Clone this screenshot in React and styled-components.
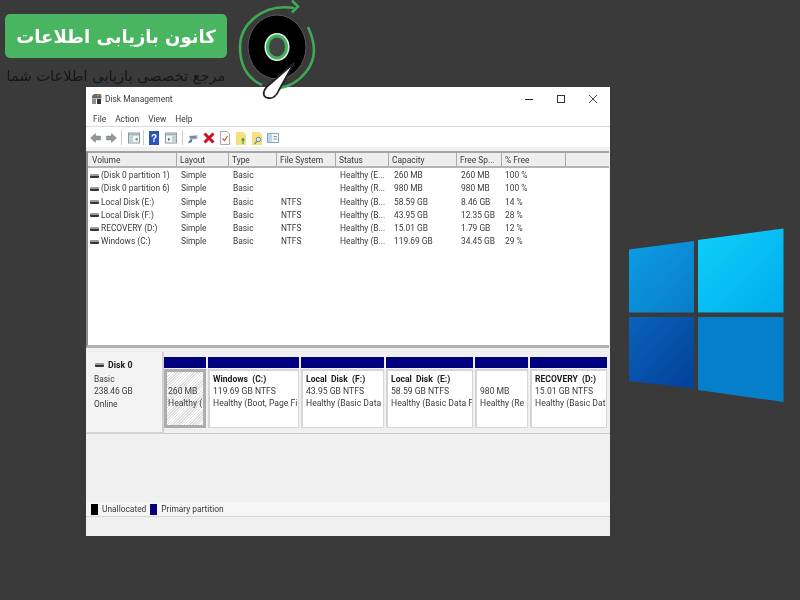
import React from "react";
import styled, { createGlobalStyle } from "styled-components";

const Global = createGlobalStyle`
  html, body { margin: 0; padding: 0; background: #3a3a3a; }
  #root { width: 800px; height: 600px; overflow: hidden; }
`;

const Desktop = styled.div`
  position: relative; width: 800px; height: 600px; background: #3a3a3a; overflow: hidden;
  font-family: Roboto, "Open Sans", sans-serif; color: #3a3a3a;
`;
const Banner = styled.div`
  position: absolute; left: 5px; top: 14px; width: 222px; height: 44px; border-radius: 5px;
  background: #4ab560; color: #fff; display: flex; align-items: center; justify-content: center;
  font: bold 18px "DejaVu Sans", sans-serif; direction: rtl; white-space: nowrap; filter: blur(.5px);
`;
const Tagline = styled.div`
  position: absolute; left: 5px; top: 66px; width: 222px; text-align: center; color: #161616;
  font: 14.6px/20px "DejaVu Sans", sans-serif; direction: rtl; white-space: nowrap; filter: blur(.6px);
`;
const DiscLogo = styled.svg`position: absolute; left: 235px; top: 0; z-index: 3; filter: blur(.4px);`;
const WinLogo = styled.svg`position: absolute; left: 620px; top: 220px; filter: blur(.3px);`;

const Win = styled.div`
  position: absolute; left: 86px; top: 87px; width: 523.5px; height: 449px; background: #f0f0f0;
  display: flex; flex-direction: column; font-size: 8.4px; filter: blur(.3px); z-index: 2;
`;
const TitleBar = styled.div`
  height: 23px; flex: none; background: #fff; display: flex; align-items: center; padding-left: 5px; gap: 3px; font-size: 8.4px;
`;
const WinButtons = styled.div`margin-left: auto; display: flex;`;
const WinBtn = styled.svg`width: 32px; height: 24px; display: block;`;
const MenuBar = styled.div`
  height: 17px; flex: none; background: #fff; display: flex; align-items: center; gap: 9px; padding: 2px 0 0 7px;
  border-bottom: 1px solid #d9d9d9; font-size: 8.4px; box-sizing: border-box;
`;
const ToolBar = styled.div`
  height: 24px; flex: none; display: flex; align-items: center; padding: 0 0 3px 4px; box-sizing: border-box;
  background: linear-gradient(#fff 82%, #f0f0f0 82%);
`;
const Tool = styled.svg`width: ${p => p.$w || 12}px; height: 14px; display: block; margin-left: ${p => p.$ml || 0}px; flex: none;`;
const Gap = styled.span`width: 5px; flex: none;`;
const Sep = styled.div`width: 1px; height: 15px; background: #ccc; margin-left: ${p => p.$ml || 3}px; margin-right: ${p => p.$mr || 3}px;`;

const List = styled.div`
  height: 197px; box-sizing: border-box; flex: none; background: #fff; margin-right: 1px;
  border-left: 2px solid #8a8a8a; border-top: 2px solid #a5a5a5; border-bottom: 3px solid #b0b0b0;
  display: flex; flex-direction: column;
`;
const cols = "89px 52px 48px 59px 53px 68px 45px 64px 1fr";
const Head = styled.div`
  display: grid; grid-template-columns: ${cols}; height: 15px; box-sizing: border-box; background: #eeeeee; border-bottom: 2px solid #b4b4b4; flex: none;
`;
const HeadCell = styled.div`
  border-right: ${p => p.$last ? "none" : "1px solid #a9a9a9"}; padding-left: ${p => p.$pl || 3}px; line-height: 14px; white-space: nowrap; overflow: hidden;
`;
const Rows = styled.div`padding-top: 1px;`;
const Row = styled.div`display: grid; grid-template-columns: ${cols}; height: 13.25px; line-height: 13.25px;`;
const Cell = styled.div`padding-left: ${p => p.$pl || 4}px; white-space: nowrap; overflow: hidden; display: flex; align-items: center; gap: 2px;`;
const DriveIcon = styled.span`
  width: 9px; height: 4px; margin-left: 1px; flex: none; display: block; border-radius: 1px;
  background: linear-gradient(#9a9a9a 40%, #333 40%);
`;

const Graph = styled.div`
  flex: 1; display: flex; flex-direction: column; background: #f0f0f0; min-height: 0;
`;
const DiskRow = styled.div`
  display: flex; height: 86px; flex: none; padding-top: 4px; border-bottom: 1px solid #c9c9c9; box-sizing: border-box;
`;
const DiskInfo = styled.div`
  width: 77px; height: 82px; margin-left: 1px; flex: none; background: #f3f3f3; border-right: 2px solid #d2d2d2; border-bottom: 2px solid #d2d2d2;
  box-sizing: border-box; padding: 7px 0 0 7px; line-height: 12.6px;
`;
const DiskName = styled.div`display: flex; align-items: center; gap: 4px; font-weight: 700; color: #222; font-size: 8.8px; margin-bottom: 1px;`;
const Parts = styled.div`display: flex; gap: 2px; padding: 5px 0 0 0; font-size: 8.6px;`;
const Part = styled.div`width: ${p => p.$w}px; display: flex; flex-direction: column; flex: none;`;
const PartBar = styled.div`height: 11px; background: #00007f; flex: none;`;
const PartBox = styled.div`
  height: 59px; box-sizing: border-box; margin-top: 1px; overflow: hidden; white-space: nowrap; line-height: 12px;
  padding: 2px 0 0 3px; background: #fff; border: 1px solid #d6d6d6; border-left-width: 2px; border-top-width: 2px;
`;
const HatchBox = styled(PartBox)`
  border: 3px solid #adadad; padding: 13px 0 0 1px; background: repeating-linear-gradient(135deg, #fff 0 1px, #dedede 1px 2px);
`;
const PartTitle = styled.div`font-weight: 700; color: #1a1a1a; height: 12px; word-spacing: 2px;`;
const Spacer = styled.div`flex: 1;`;
const Legend = styled.div`
  height: 14px; flex: none; background: #f5f5f5; display: flex; align-items: center; padding-left: 5px; gap: 4px;
  border-bottom: 1px solid #d5d5d5;
`;
const Swatch = styled.span`width: 7px; height: 11px; background: ${p => p.$c}; display: block; margin-left: ${p => p.$ml || 0}px;`;
const Status = styled.div`height: 19px; flex: none; background: #f0f0f0;`;

const rows = [
  ["(Disk 0 partition 1)", "", "Healthy (E...", "260 MB", "260 MB", "100 %"],
  ["(Disk 0 partition 6)", "", "Healthy (R...", "980 MB", "980 MB", "100 %"],
  ["Local Disk (E:)", "NTFS", "Healthy (B...", "58.59 GB", "8.46 GB", "14 %"],
  ["Local Disk (F:)", "NTFS", "Healthy (B...", "43.95 GB", "12.35 GB", "28 %"],
  ["RECOVERY (D:)", "NTFS", "Healthy (B...", "15.01 GB", "1.79 GB", "12 %"],
  ["Windows (C:)", "NTFS", "Healthy (B...", "119.69 GB", "34.45 GB", "29 %"],
];
const headers = ["Volume", "Layout", "Type", "File System", "Status", "Capacity", "Free Sp...", "% Free", ""];
const parts = [
  { w: 91, title: "Windows  (C:)", a: "119.69 GB NTFS", b: "Healthy (Boot, Page Fi" },
  { w: 83, title: "Local Disk  (F:)", a: "43.95 GB NTFS", b: "Healthy (Basic Data" },
  { w: 87, title: "Local Disk  (E:)", a: "58.59 GB NTFS", b: "Healthy (Basic Data F" },
  { w: 53, title: "", a: "980 MB", b: "Healthy (Re" },
  { w: 77, title: "RECOVERY  (D:)", a: "15.01 GB NTFS", b: "Healthy (Basic Dat" },
];

const Arrow = ({ flip }) => (
  <Tool $w={11} viewBox="0 0 11 14" style={flip ? { transform: "scaleX(-1)" } : undefined}>
    <path d="M0.5 7 L5.5 2.5 V5 H10.5 V9 H5.5 V11.5 Z" fill="#8f9a92" stroke="#7d857f" strokeWidth=".5" />
  </Tool>
);
const Panel = ({ side }) => (
  <Tool $w={12} viewBox="0 0 12 14">
    <rect x=".5" y="2" width="11" height="10" fill="#f4f6f6" stroke="#8b9aa3" />
    <rect x="1" y="2.5" width="10" height="2" fill="#9fb2bd" />
    <rect x={side === "l" ? 1 : 7} y="5" width="4" height="6.5" fill="#c6d2d8" />
    <path d={side === "l" ? "M9.5 6.5 L7 8.2 L9.5 10Z" : "M3 6.5 L5.5 8.2 L3 10Z"} fill="#4d8d55" />
  </Tool>
);

export default function App() {
  return (
    <Desktop>
      <Global />
      <Banner>کانون بازیابی اطلاعات</Banner>
      <Tagline>مرجع تخصصی بازیابی اطلاعات شما</Tagline>
      <DiscLogo width="90" height="105" viewBox="235 0 90 105">
        <path d="M294 8 C 262 3, 240 25, 240 47 C 240 65, 247 78, 262 85" fill="none" stroke="#3fa956" strokeWidth="2.6" />
        <path d="M292 0.5 L298 6.5 L292 12.5" fill="none" stroke="#3fa956" strokeWidth="2.6" />
        <path d="M308 27 C 316 44, 316 60, 306 72 C 298 82, 290 87, 278 88" fill="none" stroke="#3fa956" strokeWidth="2.6" />
        <ellipse cx="277" cy="47" rx="29" ry="32" fill="#000" stroke="#5a5a5a" strokeWidth="1" />
        <ellipse cx="277" cy="47" rx="12.5" ry="14" fill="#e8e8e8" />
        <ellipse cx="277" cy="47" rx="11" ry="12.5" fill="#3fb35a" />
        <ellipse cx="277" cy="47" rx="8" ry="9.5" fill="#444" />
        <path d="M294 63 L270 84 C 262 90, 262 97, 268 98 C 273 99, 277 95, 279 90 Z" fill="#fff" stroke="#222" strokeWidth="1.8" strokeLinejoin="round" />
      </DiscLogo>
      <WinLogo width="180" height="190" viewBox="620 220 180 190">
        <defs>
          <linearGradient id="tl" x1="0" y1="0" x2="1" y2="1"><stop offset="0" stopColor="#0b9de6" /><stop offset="1" stopColor="#0a7cc6" /></linearGradient>
          <linearGradient id="tr" x1="0" y1="0" x2="1" y2="1"><stop offset="0" stopColor="#0fd0fb" /><stop offset="1" stopColor="#00acea" /></linearGradient>
          <linearGradient id="bl" x1="0" y1="0" x2="1" y2="1"><stop offset="0" stopColor="#0a62b8" /><stop offset="1" stopColor="#03409a" /></linearGradient>
        </defs>
        <polygon points="629,249.5 694,241 694,312.5 629,312.5" fill="url(#tl)" />
        <polygon points="698,240 783.5,228.5 783.5,312.5 698,312.5" fill="url(#tr)" />
        <polygon points="629,317 694,317 694,388.5 629,381" fill="url(#bl)" />
        <polygon points="698,317 783.5,317 783.5,402 698,390" fill="#067fcb" />
      </WinLogo>

      <Win>
        <TitleBar>
          <Tool $w={11} viewBox="0 0 11 14">
            <path d="M1 4 L3 2 H9.5 L10.5 4 V6.5 H1Z" fill="#6b6b6b" />
            <rect x="1" y="7" width="4" height="5" fill="#8d8d8d" />
            <rect x="6" y="7" width="4" height="5" fill="#333" />
            <rect x="6" y="2.5" width="2" height="1.5" fill="#d08a3a" />
          </Tool>
          Disk Management
          <WinButtons>
            <WinBtn viewBox="0 0 32 24"><rect x="11" y="12" width="8" height="1" fill="#222" /></WinBtn>
            <WinBtn viewBox="0 0 32 24"><rect x="11.5" y="8.5" width="7" height="7" fill="none" stroke="#333" /></WinBtn>
            <WinBtn viewBox="0 0 32 24"><path d="M11 8 L19 16 M19 8 L11 16" stroke="#333" strokeWidth=".9" /></WinBtn>
          </WinButtons>
        </TitleBar>
        <MenuBar>
          <span>File</span><span>Action</span><span>View</span><span>Help</span>
        </MenuBar>
        <ToolBar>
          <Arrow />
          <Gap />
          <Arrow flip />
          <Sep $ml={4} $mr={6} />
          <Panel side="l" />
          <Sep $ml={3} $mr={5} />
          <Tool $w={10} viewBox="0 0 10 14">
            <rect width="10" height="14" y="0" fill="#2a57b5" />
            <text x="5" y="10.5" fontSize="10" fontWeight="700" textAnchor="middle" fill="#fff" fontFamily="Liberation Sans">?</text>
          </Tool>
          <Tool $w={12} $ml={6} viewBox="0 0 12 14">
            <rect x=".5" y="2" width="11" height="10" fill="#f4f6f6" stroke="#8b9aa3" />
            <rect x="1" y="2.5" width="10" height="2" fill="#9fb2bd" />
            <rect x="7" y="5" width="4" height="6.5" fill="#c6d2d8" />
            <path d="M3 6.5 L5.5 8.2 L3 10Z" fill="#4d8d55" />
          </Tool>
          <Sep $ml={5} $mr={4} />
          <Tool $w={11} viewBox="0 0 11 14">
            <path d="M2 5 L10.5 4 V8 L3 9Z" fill="#9cb6c4" />
            <path d="M2 10 L5 8 V11 L1 12.5Z" fill="#4f7d95" />
            <path d="M3 6 H9" stroke="#444" strokeWidth=".8" />
          </Tool>
          <Tool $w={12} $ml={5} viewBox="0 0 12 14">
            <path d="M1.5 2.5 L10.5 11.5 M10.5 2.5 L1.5 11.5" stroke="#cf1020" strokeWidth="3" />
          </Tool>
          <Tool $w={10} $ml={5} viewBox="0 0 10 14">
            <path d="M.5 .5 H7 L9.5 3 V13.5 H.5Z" fill="#fbfbfb" stroke="#aaa" />
            <path d="M2.5 7.5 L4.5 9.5 L7.5 5" fill="none" stroke="#d9513c" strokeWidth="1.2" />
          </Tool>
          <Tool $w={10} $ml={6} viewBox="0 0 10 14">
            <path d="M0 1 H7 L10 4 V14 H0Z" fill="#f7df7d" />
            <path d="M6.5 13 V9.5 H5 L7 6.5 L9 9.5 H7.5 V13Z" fill="#2f9a3a" />
          </Tool>
          <Tool $w={10} $ml={6} viewBox="0 0 10 14">
            <path d="M0 1 H7 L10 4 V14 H0Z" fill="#f7df7d" />
            <circle cx="6.5" cy="8.5" r="2.2" fill="#dbe8ef" stroke="#6e8796" />
            <path d="M5 10.2 L2.5 13" stroke="#6e8796" strokeWidth="1.2" />
          </Tool>
          <Tool $w={12} $ml={5} viewBox="0 0 12 14">
            <rect x=".5" y="2.5" width="11" height="9" fill="#f0f6fa" stroke="#8ea7b7" />
            <rect x="1" y="3" width="4" height="8" fill="#c0d7e5" />
            <path d="M6.5 5.5 H10 M6.5 8 H10" stroke="#6a7f8c" strokeWidth=".8" />
          </Tool>
        </ToolBar>
        <List>
          <Head>
            {headers.map((h, i) => <HeadCell key={i} $last={i === 8} $pl={i === 0 ? 4 : 3}>{h}</HeadCell>)}
          </Head>
          <Rows>
            {rows.map((r) => (
              <Row key={r[0]}>
                <Cell $pl={1}><DriveIcon />{r[0]}</Cell>
                <Cell>Simple</Cell>
                <Cell>Basic</Cell>
                <Cell>{r[1]}</Cell>
                <Cell>{r[2]}</Cell>
                <Cell $pl={5}>{r[3]}</Cell>
                <Cell>{r[4]}</Cell>
                <Cell $pl={3}>{r[5]}</Cell>
                <Cell />
              </Row>
            ))}
          </Rows>
        </List>
        <Graph>
          <DiskRow>
            <DiskInfo>
              <DiskName><DriveIcon />Disk 0</DiskName>
              <div>Basic</div>
              <div>238.46 GB</div>
              <div>Online</div>
            </DiskInfo>
            <Parts>
              <Part $w={42}>
                <PartBar />
                <HatchBox>260 MB<br />Healthy (</HatchBox>
              </Part>
              {parts.map((p, i) => (
                <Part key={i} $w={p.w}>
                  <PartBar />
                  <PartBox>
                    <PartTitle>{p.title}</PartTitle>
                    <div>{p.a}</div>
                    <div>{p.b}</div>
                  </PartBox>
                </Part>
              ))}
            </Parts>
          </DiskRow>
          <Spacer />
          <Legend>
            <Swatch $c="#000" />
            <span>Unallocated</span>
            <Swatch $c="#00007f" />
            <span>Primary partition</span>
          </Legend>
          <Status />
        </Graph>
      </Win>
    </Desktop>
  );
}
